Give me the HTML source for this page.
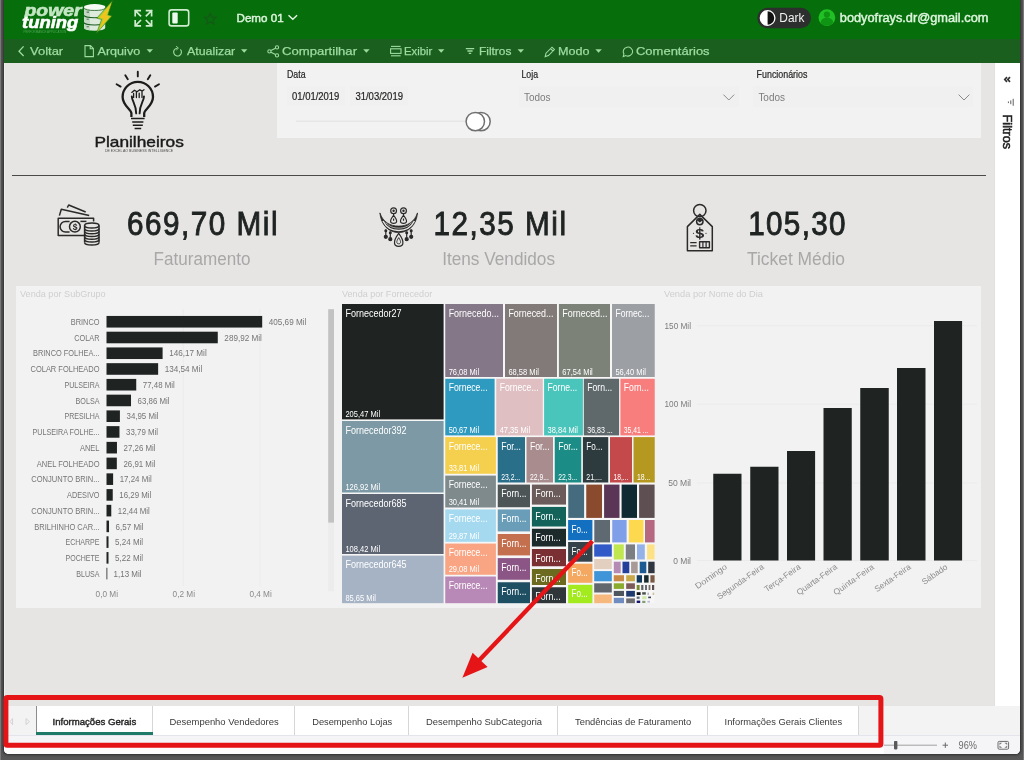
<!DOCTYPE html>
<html lang="pt-BR">
<head>
<meta charset="utf-8">
<title>Demo 01 - Power Tuning</title>
<style>
html,body{margin:0;padding:0}
body{width:1024px;height:760px;position:relative;overflow:hidden;background:#575757;font-family:"Liberation Sans", sans-serif}
.abs{position:absolute}
#win{left:4px;top:0;width:1016px;height:754px;background:#fff;border-radius:0 0 5px 5px;overflow:hidden;box-shadow:0 0 2.5px 0.5px #2e2e2e}
#head{left:0;top:0;width:1016px;height:39px;background:#076e0c}
#tool{left:0;top:39px;width:1016px;height:24px;background:#1b5f1f}
#canvas{left:0;top:63px;width:990px;height:643px;background:#e6e5e3}
#side{left:990px;top:63px;width:26px;height:643px;background:#fff;box-sizing:border-box;border-left:1px solid #e0e0e0}
#status{left:0;top:706px;width:1016px;height:48px;background:#f3f3f3}
#slicers{left:273px;top:0;width:704px;height:75px;background:#f2f2f2}
#charts{left:12px;top:223px;width:965px;height:322px;background:#f2f2f2}
.box{position:absolute;background:#f0f0f0}
#tabs{left:32px;top:1px;height:28px;display:block}
.tab{position:absolute;top:0;height:29px;background:#fff;border-right:1px solid #d6d6d6;box-sizing:border-box}
#ov{left:0;top:0;width:1024px;height:760px;pointer-events:none;will-change:transform}
svg text{font-family:"Liberation Sans", sans-serif}
</style>
</head>
<body>
<div class="abs" style="left:0;top:0;width:1px;height:760px;background:#7a7a7a"></div>
<div class="abs" style="left:1023px;top:0;width:1px;height:760px;background:#7a7a7a"></div>
<div id="win" class="abs">
  <div id="head" class="abs"></div>
  <div id="tool" class="abs"></div>
  <div id="canvas" class="abs">
    <div id="slicers" class="abs">
      <div class="box" style="left:10px;top:23px;width:58px;height:20px"></div>
      <div class="box" style="left:73px;top:23px;width:58px;height:20px"></div>
      <div class="box" style="left:242px;top:23px;width:220px;height:21px"></div>
      <div class="box" style="left:476px;top:23px;width:220px;height:21px"></div>
    </div>
    <div class="abs" style="left:8px;top:112px;width:974px;height:1px;background:#4a4a4a"></div>
    <div id="charts" class="abs"></div>
    <div class="abs" style="left:0;top:0;width:1px;height:643px;background:#eeeeee"></div>
  </div>
  <div id="side" class="abs"></div>
  <div id="status" class="abs">
    <div class="tab" style="left:32px;width:117px;border-left:1px solid #8d8d8d"></div>
    <div class="tab" style="left:149px;width:142px"></div>
    <div class="tab" style="left:291px;width:114px"></div>
    <div class="tab" style="left:405px;width:149px"></div>
    <div class="tab" style="left:554px;width:150px"></div>
    <div class="tab" style="left:704px;width:151px"></div>
    <div class="abs" style="left:32px;top:26px;width:117px;height:3px;background:#1f7a67"></div>
    <div class="abs" style="left:0;top:29px;width:1016px;height:19px;background:#f5f5f8"></div>
    <div class="abs" style="left:0;top:29px;width:1016px;height:1px;background:#e4e5ec"></div>
    <div class="abs" style="left:0;top:42px;width:880px;height:6px;background:#fdfdfd"></div>
  </div>
</div>

<svg id="ov" class="abs" width="1024" height="760" viewBox="0 0 1024 760">
<g id="brand">
<text x="24.50" y="16.40" font-size="16.5" fill="#c4e6c4" font-weight="bold" font-style="italic" stroke="#c4e6c4" stroke-width="0.6" textLength="57.00" lengthAdjust="spacingAndGlyphs">power</text>
<text x="22.00" y="27.60" font-size="16.5" fill="#ffffff" font-weight="bold" font-style="italic" stroke="#ffffff" stroke-width="0.6" textLength="56.30" lengthAdjust="spacingAndGlyphs">tuning</text>
<text x="23.50" y="32.60" font-size="3.2" fill="#4fa653" textLength="42.70" lengthAdjust="spacingAndGlyphs">PERFORMANCE APPLICATION</text>
<path d="M84 7 L84 28 A10.6 2.7 0 0 0 105.2 28 L105.2 7 Z" fill="#dcebdc"/>
<path d="M84 7 L84 28 A10.6 2.7 0 0 0 90 30.2 L90 9 Z" fill="#c3d9c3"/>
<g fill="none" stroke="#1f5c22" stroke-width="1.1"><path d="M84 15.3 A10.6 2.4 0 0 0 105.2 15.3"/><path d="M84 22.6 A10.6 2.4 0 0 0 105.2 22.6"/></g>
<path d="M84.2 8.4 A10.6 2.6 0 0 0 105 8.4" fill="none" stroke="#39743b" stroke-width="0.9"/>
<ellipse cx="94.7" cy="6.8" rx="10.7" ry="2.7" fill="#f6fbf6"/>
<rect x="86.6" y="11.6" width="2.4" height="1.1" fill="#4c6b4e"/><rect x="86.6" y="18.6" width="2.2" height="1.3" fill="#6d8a6f"/><rect x="86.6" y="26" width="2.2" height="1.3" fill="#6d8a6f"/>
<path d="M112.5 0.5 L96.7 18.2 L101.5 19.5 L96.5 33.3 L112 16 L108 14.8 Z" fill="#9ad42b" stroke="#2f6414" stroke-width="0.5"/>
<path d="M111.4 3.2 L99.2 17.6 L103.4 18.8 L99.4 29 L110 16.6 L106.4 15.4 Z" fill="#f0c31f"/>
</g>
<g stroke="#cfeccf" stroke-width="1.7" fill="none" stroke-linecap="square">
<path d="M140.2 10.6 L135.2 10.6 L135.2 15.6 M135.2 10.6 L140.4 15.8"/>
<path d="M146.6 10.6 L151.6 10.6 L151.6 15.6 M151.6 10.6 L146.4 15.8"/>
<path d="M140.2 25.8 L135.2 25.8 L135.2 20.8 M135.2 25.8 L140.4 20.6"/>
<path d="M146.6 25.8 L151.6 25.8 L151.6 20.8 M151.6 25.8 L146.4 20.6"/>
</g>
<rect x="169.1" y="9.9" width="19.6" height="16" rx="2.5" fill="none" stroke="#cfeccf" stroke-width="1.6"/>
<rect x="172.3" y="12.4" width="5.4" height="11.2" rx="1" fill="#eefaee"/>
<path d="M210.2 13.2 L211.9 16.9 L215.9 17.3 L212.9 20 L213.8 23.9 L210.2 21.9 L206.6 23.9 L207.5 20 L204.5 17.3 L208.5 16.9 Z" fill="none" stroke="#145a17" stroke-width="1.3"/>
<text x="236.50" y="21.80" font-size="11.6" fill="#dcf4dc" stroke="#dcf4dc" stroke-width="0.45" textLength="47.10" lengthAdjust="spacingAndGlyphs">Demo 01</text>
<path d="M288.5 15.2 L292.8 19.3 L297.1 15.2" fill="none" stroke="#e4f6e4" stroke-width="1.4"/>
<rect x="757.3" y="7.8" width="53.7" height="20.4" rx="10.2" fill="#2c2f2e"/>
<circle cx="767.6" cy="18" r="7.3" fill="#111" stroke="#fff" stroke-width="1.3"/>
<path d="M767.6 10.7 A7.3 7.3 0 0 0 767.6 25.3 Z" fill="#fff"/>
<text x="779.30" y="22.30" font-size="12" fill="#f2f2f2" textLength="25.10" lengthAdjust="spacingAndGlyphs">Dark</text>
<circle cx="826.9" cy="17.6" r="8.4" fill="#21c024"/>
<circle cx="826.9" cy="14.6" r="3.1" fill="#0f9414"/>
<path d="M820.6 23 A6.3 5.6 0 0 1 833.2 23 A8.4 8.4 0 0 1 820.6 23 Z" fill="#0f9414"/>
<text x="839.80" y="22.20" font-size="12.5" fill="#dcf5dc" stroke="#dcf5dc" stroke-width="0.45" textLength="148.60" lengthAdjust="spacingAndGlyphs">bodyofrays.dr@gmail.com</text>
<g id="toolbar">
<path d="M23.6 46.4 L19 51.2 L23.6 56" fill="none" stroke="#9ddc9f" stroke-width="1.3"/>
<text x="30.00" y="55.40" font-size="11.5" fill="#9ddc9f" stroke="#9ddc9f" stroke-width="0.25" textLength="33.20" lengthAdjust="spacingAndGlyphs">Voltar</text>
<path d="M85 45.6 L90.4 45.6 L93.4 48.6 L93.4 56.6 L85 56.6 Z M90.2 45.8 L90.2 48.8 L93.2 48.8" fill="none" stroke="#9ddc9f" stroke-width="1.1"/>
<text x="97.50" y="55.40" font-size="11.5" fill="#9ddc9f" stroke="#9ddc9f" stroke-width="0.25" textLength="42.70" lengthAdjust="spacingAndGlyphs">Arquivo</text>
<path d="M146.6 49.2 L153.0 49.2 L149.79999999999998 52.8 Z" fill="#9ddc9f"/>
<path d="M180.4 49.4 A3.9 3.9 0 1 1 177 48.2" fill="none" stroke="#9ddc9f" stroke-width="1.15"/><path d="M176.2 46.2 L178.4 48.1 L176.4 50" fill="none" stroke="#9ddc9f" stroke-width="1"/>
<text x="187.00" y="55.40" font-size="11.5" fill="#9ddc9f" stroke="#9ddc9f" stroke-width="0.25" textLength="48.20" lengthAdjust="spacingAndGlyphs">Atualizar</text>
<path d="M241 49.2 L247.4 49.2 L244.2 52.8 Z" fill="#9ddc9f"/>
<g fill="none" stroke="#9ddc9f" stroke-width="1.1"><circle cx="269.4" cy="51.4" r="1.6"/><circle cx="277" cy="47.4" r="1.6"/><circle cx="277" cy="55.4" r="1.6"/><path d="M270.9 50.6 L275.5 48.2 M270.9 52.2 L275.5 54.6"/></g>
<text x="282.00" y="55.40" font-size="11.5" fill="#9ddc9f" stroke="#9ddc9f" stroke-width="0.25" textLength="75.00" lengthAdjust="spacingAndGlyphs">Compartilhar</text>
<path d="M363.2 49.2 L369.59999999999997 49.2 L366.4 52.8 Z" fill="#9ddc9f"/>
<g fill="none" stroke="#9ddc9f" stroke-width="1.1"><path d="M391 46.4 L400.6 46.4"/><rect x="390.6" y="48.8" width="10.4" height="4.6"/><path d="M391 55.8 L400.6 55.8"/></g>
<text x="404.00" y="55.40" font-size="11.5" fill="#9ddc9f" stroke="#9ddc9f" stroke-width="0.25" textLength="28.20" lengthAdjust="spacingAndGlyphs">Exibir</text>
<path d="M438 49.2 L444.4 49.2 L441.2 52.8 Z" fill="#9ddc9f"/>
<g stroke="#9ddc9f" stroke-width="1.3"><path d="M465.8 48.6 L474.2 48.6 M467.4 51 L472.6 51 M468.8 53.4 L471.2 53.4"/></g>
<text x="479.00" y="55.40" font-size="11.5" fill="#9ddc9f" stroke="#9ddc9f" stroke-width="0.25" textLength="32.40" lengthAdjust="spacingAndGlyphs">Filtros</text>
<path d="M517.6 49.2 L524.0 49.2 L520.8000000000001 52.8 Z" fill="#9ddc9f"/>
<path d="M545.2 56.6 L546 53.2 L552 47.2 L554.4 49.6 L548.4 55.6 Z M550.6 48.6 L553 51" fill="none" stroke="#9ddc9f" stroke-width="1.1"/>
<text x="558.00" y="55.40" font-size="11.5" fill="#9ddc9f" stroke="#9ddc9f" stroke-width="0.25" textLength="31.60" lengthAdjust="spacingAndGlyphs">Modo</text>
<path d="M595.4 49.2 L601.8 49.2 L598.6 52.8 Z" fill="#9ddc9f"/>
<path d="M623.2 56.6 L623.9 53.9 A4.7 4.5 0 1 1 625.8 55.6 Z" fill="none" stroke="#9ddc9f" stroke-width="1.05"/>
<text x="636.00" y="55.40" font-size="11.5" fill="#9ddc9f" stroke="#9ddc9f" stroke-width="0.25" textLength="73.60" lengthAdjust="spacingAndGlyphs">Comentários</text>
</g>
<g id="slicer-text">
<text x="287.00" y="78.40" font-size="10.5" fill="#252423" stroke="#252423" stroke-width="0.2" textLength="18.60" lengthAdjust="spacingAndGlyphs">Data</text>
<text x="292.00" y="99.60" font-size="10.5" fill="#252423" stroke="#252423" stroke-width="0.2" textLength="47.40" lengthAdjust="spacingAndGlyphs">01/01/2019</text>
<text x="355.40" y="99.60" font-size="10.5" fill="#252423" stroke="#252423" stroke-width="0.2" textLength="47.60" lengthAdjust="spacingAndGlyphs">31/03/2019</text>
<path d="M296 121.2 L467 121.2" stroke="#e5e5e5" stroke-width="1.6"/>
<circle cx="481" cy="121.6" r="9.2" fill="#fff" stroke="#707070" stroke-width="1.5"/>
<circle cx="475.3" cy="121.6" r="9.2" fill="#fff" stroke="#707070" stroke-width="1.5"/>
<text x="521.50" y="78.40" font-size="10.5" fill="#252423" stroke="#252423" stroke-width="0.2" textLength="16.50" lengthAdjust="spacingAndGlyphs">Loja</text>
<text x="524.00" y="101.00" font-size="10.5" fill="#7c7c7c" textLength="26.60" lengthAdjust="spacingAndGlyphs">Todos</text>
<path d="M723.4 94.6 L728.8 100 L734.2 94.6" fill="none" stroke="#8a8a8a" stroke-width="1"/>
<text x="756.60" y="78.40" font-size="10.5" fill="#252423" stroke="#252423" stroke-width="0.2" textLength="50.80" lengthAdjust="spacingAndGlyphs">Funcionários</text>
<text x="758.40" y="101.00" font-size="10.5" fill="#7c7c7c" textLength="26.60" lengthAdjust="spacingAndGlyphs">Todos</text>
<path d="M958.6 94.6 L964 100 L969.4 94.6" fill="none" stroke="#8a8a8a" stroke-width="1"/>
</g>
<g id="filters-pane">
<path d="M1007 77.2 L1004.8 79.5 L1007 81.8 M1010 77.2 L1007.8 79.5 L1010 81.8" fill="none" stroke="#333" stroke-width="1.7"/>
<path d="M1013.2 98.8 L1013.2 105.8 M1010.8 100.4 L1010.8 104.2 M1008.4 101.5 L1008.4 103.1" stroke="#555" stroke-width="0.95" fill="none"/>
<text transform="translate(1003.40 114.60) rotate(90)" font-size="12" fill="#222" textLength="34.6" lengthAdjust="spacingAndGlyphs" stroke="#222" stroke-width="0.5">Filtros</text>
</g>
<g id="logo" fill="none" stroke="#1c1c1c" stroke-linecap="round">
<path d="M131.4 117 L131.4 113.2 C131.4 109.6 122.6 105.6 122.6 97 A15.2 15.2 0 0 1 153 97 C153 105.6 144.2 109.6 144.2 113.2 L144.2 117" stroke-width="2.3" stroke-linecap="butt"/>
<path d="M131 118.4 L144.6 118.4 M132.2 121.9 L143.4 121.9 M132.8 125.3 L142.8 125.3 M134.6 128.6 L141.2 128.6" stroke-width="1.5" stroke-linecap="butt"/>
<path d="M137.8 71.8 L137.8 76.4 M125.3 75.2 L127.8 79.2 M150.3 75.2 L147.8 79.2 M116.6 84.2 L120.6 86.6 M159 84.2 L155 86.6" stroke-width="1.9"/>
<path d="M136.2 113.4 C136 104 132 101.6 131.8 96.4 M139.6 113.4 C139.8 104 143.8 101.6 144 96.4" stroke-width="1.9"/>
<path d="M133.6 97.4 L133.6 93.4 M136.4 97.6 L136.4 92.2 M139.2 97.6 L139.2 93.2 M142 97.4 L142 91.6 M131.8 92.4 L134.4 90.2 L137 91.8 L139.8 89.8 L142.2 91 L144 89.8" stroke-width="1.3"/>
</g>
<text x="94.40" y="147.00" font-size="14.6" fill="#1a1a1a" stroke="#1a1a1a" stroke-width="0.4" textLength="89.40" lengthAdjust="spacingAndGlyphs">Planilheiros</text>
<text x="105.00" y="151.80" font-size="2.6" fill="#4a4a4a" textLength="68.20" lengthAdjust="spacingAndGlyphs">DE EXCEL AO BUSINESS INTELLIGENCE</text>
<g id="kpi">
<text transform="translate(126.9 235) scale(0.9 1)" font-size="33" fill="#1f2423" stroke="#1f2423" stroke-width="0.9" textLength="167.44" lengthAdjust="spacing">669,70 Mil</text>
<text x="153.60" y="265.00" font-size="17.5" fill="#a8a8a8" textLength="96.80" lengthAdjust="spacingAndGlyphs">Faturamento</text>
<text transform="translate(433.6 235) scale(0.9 1)" font-size="33" fill="#1f2423" stroke="#1f2423" stroke-width="0.9" textLength="147.11" lengthAdjust="spacing">12,35 Mil</text>
<text x="442.20" y="265.00" font-size="17.5" fill="#a8a8a8" textLength="112.80" lengthAdjust="spacingAndGlyphs">Itens Vendidos</text>
<text transform="translate(748.2 235) scale(0.9 1)" font-size="33" fill="#1f2423" stroke="#1f2423" stroke-width="0.9" textLength="108.22" lengthAdjust="spacing">105,30</text>
<text x="747.00" y="265.00" font-size="17.5" fill="#a8a8a8" textLength="98.00" lengthAdjust="spacingAndGlyphs">Ticket Médio</text>
</g>
<g id="ico-cash" fill="none" stroke="#2a2a2a" stroke-width="1.5" stroke-linejoin="round">
<path d="M86 235.4 L58.2 235.4 L58.2 218.2 L93.6 218.2 L93.6 221.4"/>
<path d="M59.4 215.6 L61.3 209.3 L89.2 215.6"/>
<path d="M67.3 207.6 L68.7 205 L85.7 212"/>
<circle cx="74.9" cy="226.7" r="5.4"/>
<path d="M69.6 221.4 L65.4 221.4 A5.3 5.3 0 0 0 65.4 232 L69.6 232"/>
<path d="M80.4 221.4 L86.4 221.4"/>
<ellipse cx="91.8" cy="225.6" rx="7.2" ry="2.5" fill="#e6e5e3"/>
<path d="M84.6 228.4 A7.2 2.5 0 0 0 99 228.4"/>
<path d="M84.6 231.2 A7.2 2.5 0 0 0 99 231.2"/>
<path d="M84.6 234.0 A7.2 2.5 0 0 0 99 234.0"/>
<path d="M84.6 236.8 A7.2 2.5 0 0 0 99 236.8"/>
<path d="M84.6 239.6 A7.2 2.5 0 0 0 99 239.6"/>
<path d="M84.6 242.4 A7.2 2.5 0 0 0 99 242.4"/>
<path d="M84.6 225.6 L84.6 242.4 M99 225.6 L99 242.4"/>
</g>
<text x="72.70" y="229.90" font-size="8.5" fill="#2a2a2a" font-weight="bold">$</text>
<g id="ico-neck" fill="none" stroke="#2a2a2a" stroke-width="1.2">
<path d="M379.9 212.9 C383 222 390 226.1 398.7 226.1 C407.4 226.1 414.4 222 417.5 212.9 C416.5 225 408.5 232.6 398.7 232.6 C388.9 232.6 380.9 225 379.9 212.9 Z" fill="#2a2a2a" stroke-width="0.8"/>
<path d="M383 221 C386.4 227.6 392 230.5 398.7 230.5 C405.4 230.5 411 227.6 414.4 221" stroke="#e6e5e3" stroke-width="1.5"/>
<path d="M385.8 222.6 C389.4 226.8 393.6 228.1 398.7 228.1 C403.8 228.1 408 226.8 411.6 222.6" stroke="#e6e5e3" stroke-width="0.7"/>
<circle cx="393.6" cy="210.7" r="2.9"/><circle cx="393.6" cy="210.7" r="0.6" fill="#2a2a2a"/>
<path d="M393.6 213.6 L393.6 215.4 M393.6 215.4 C389.0 221 390.20000000000005 223.4 393.6 223.4 C397.0 223.4 398.20000000000005 221 393.6 215.4 Z M393.6 218.4 L393.6 220.8"/>
<circle cx="403.5" cy="210.7" r="2.9"/><circle cx="403.5" cy="210.7" r="0.6" fill="#2a2a2a"/>
<path d="M403.5 213.6 L403.5 215.4 M403.5 215.4 C398.9 221 400.1 223.4 403.5 223.4 C406.9 223.4 408.1 221 403.5 215.4 Z M403.5 218.4 L403.5 220.8"/>
<path d="M398.7 233.4 C392.2 242 394 246.4 398.7 246.4 C403.4 246.4 405.2 242 398.7 233.4 Z"/>
<path d="M398.7 237.6 C395.8 242 396.6 243.8 398.7 243.8 C400.8 243.8 401.6 242 398.7 237.6 Z" stroke-width="0.9"/>
<path d="M385.8 229.4 L385.8 235.20000000000002"/><circle cx="385.8" cy="236.8" r="1.5" fill="#2a2a2a"/><circle cx="385.8" cy="230.8" r="0.9" fill="#2a2a2a"/>
<path d="M390.3 231.4 L390.3 237.6"/><circle cx="390.3" cy="239.2" r="1.5" fill="#2a2a2a"/><circle cx="390.3" cy="232.8" r="0.9" fill="#2a2a2a"/>
<path d="M406.7 231.4 L406.7 237.6"/><circle cx="406.7" cy="239.2" r="1.5" fill="#2a2a2a"/><circle cx="406.7" cy="232.8" r="0.9" fill="#2a2a2a"/>
<path d="M411.2 229.4 L411.2 235.20000000000002"/><circle cx="411.2" cy="236.8" r="1.5" fill="#2a2a2a"/><circle cx="411.2" cy="230.8" r="0.9" fill="#2a2a2a"/>
</g>
<g id="ico-tag" fill="none" stroke="#2a2a2a" stroke-width="1.5" stroke-linejoin="round">
<path d="M687.4 250.8 L687.4 226.6 L699.8 214.4 L712.3 226.6 L712.3 250.8 Z"/>
<circle cx="699.8" cy="210.6" r="6.2"/>
<circle cx="699.8" cy="221.6" r="3.2"/>
<path d="M690.2 242.6 L696.6 242.6 M690.2 245.9 L696.6 245.9" stroke-width="1.2"/>
<rect x="699.6" y="241.8" width="9.8" height="6" fill="none" stroke-width="1.4"/>
<path d="M702.9 242 L702.9 247.6 M706.1 242 L706.1 247.6" stroke-width="1.2"/>
<circle cx="693.5" cy="233.3" r="0.6" fill="#2a2a2a" stroke="none"/><circle cx="706" cy="233.3" r="0.6" fill="#2a2a2a" stroke="none"/>
</g>
<text transform="translate(699.80 237.60) scale(1.3 1)" font-size="12.5" fill="#2a2a2a" font-weight="bold" text-anchor="middle">$</text>
<path d="M699.8 227.2 L699.8 239.2" stroke="#2a2a2a" stroke-width="1.1"/>
<path d="M697 220.6 A3 3 0 0 1 702.6 220.6 L699.8 222.6 Z" fill="#2a2a2a"/>
<g id="bar-chart">
<text x="20.00" y="296.80" font-size="9.2" fill="#cfcfcf" textLength="85.60" lengthAdjust="spacingAndGlyphs">Venda por SubGrupo</text>
<path d="M183.3 309 L183.3 586 M260 309 L260 586" stroke="#ececec" stroke-width="1"/>
<rect x="106.5" y="315.95" width="155.70" height="11.6" fill="#1f2423"/>
<text x="70.75" y="324.95" font-size="9" fill="#757575" textLength="28.75" lengthAdjust="spacingAndGlyphs">BRINCO</text>
<text x="268.80" y="324.95" font-size="9" fill="#757575" textLength="37.50" lengthAdjust="spacingAndGlyphs">405,69 Mil</text>
<rect x="106.5" y="331.69" width="111.27" height="11.6" fill="#1f2423"/>
<text x="74.25" y="340.69" font-size="9" fill="#757575" textLength="25.25" lengthAdjust="spacingAndGlyphs">COLAR</text>
<text x="224.37" y="340.69" font-size="9" fill="#757575" textLength="37.50" lengthAdjust="spacingAndGlyphs">289,92 Mil</text>
<rect x="106.5" y="347.43" width="56.10" height="11.6" fill="#1f2423"/>
<text x="33.00" y="356.43" font-size="9" fill="#757575" textLength="66.50" lengthAdjust="spacingAndGlyphs">BRINCO FOLHEA...</text>
<text x="169.20" y="356.43" font-size="9" fill="#757575" textLength="37.50" lengthAdjust="spacingAndGlyphs">146,17 Mil</text>
<rect x="106.5" y="363.17" width="51.64" height="11.6" fill="#1f2423"/>
<text x="30.50" y="372.17" font-size="9" fill="#757575" textLength="69.00" lengthAdjust="spacingAndGlyphs">COLAR FOLHEADO</text>
<text x="164.74" y="372.17" font-size="9" fill="#757575" textLength="37.50" lengthAdjust="spacingAndGlyphs">134,54 Mil</text>
<rect x="106.5" y="378.91" width="29.74" height="11.6" fill="#1f2423"/>
<text x="64.50" y="387.91" font-size="9" fill="#757575" textLength="35.00" lengthAdjust="spacingAndGlyphs">PULSEIRA</text>
<text x="142.84" y="387.91" font-size="9" fill="#757575" textLength="32.00" lengthAdjust="spacingAndGlyphs">77,48 Mil</text>
<rect x="106.5" y="394.65" width="24.51" height="11.6" fill="#1f2423"/>
<text x="75.50" y="403.65" font-size="9" fill="#757575" textLength="24.00" lengthAdjust="spacingAndGlyphs">BOLSA</text>
<text x="137.61" y="403.65" font-size="9" fill="#757575" textLength="32.00" lengthAdjust="spacingAndGlyphs">63,86 Mil</text>
<rect x="106.5" y="410.39" width="13.41" height="11.6" fill="#1f2423"/>
<text x="64.50" y="419.39" font-size="9" fill="#757575" textLength="35.00" lengthAdjust="spacingAndGlyphs">PRESILHA</text>
<text x="126.51" y="419.39" font-size="9" fill="#757575" textLength="32.00" lengthAdjust="spacingAndGlyphs">34,95 Mil</text>
<rect x="106.5" y="426.13" width="12.97" height="11.6" fill="#1f2423"/>
<text x="32.50" y="435.13" font-size="9" fill="#757575" textLength="67.00" lengthAdjust="spacingAndGlyphs">PULSEIRA FOLHE...</text>
<text x="126.07" y="435.13" font-size="9" fill="#757575" textLength="32.00" lengthAdjust="spacingAndGlyphs">33,79 Mil</text>
<rect x="106.5" y="441.87" width="10.46" height="11.6" fill="#1f2423"/>
<text x="80.00" y="450.87" font-size="9" fill="#757575" textLength="19.50" lengthAdjust="spacingAndGlyphs">ANEL</text>
<text x="123.56" y="450.87" font-size="9" fill="#757575" textLength="32.00" lengthAdjust="spacingAndGlyphs">27,26 Mil</text>
<rect x="106.5" y="457.61" width="10.33" height="11.6" fill="#1f2423"/>
<text x="36.75" y="466.61" font-size="9" fill="#757575" textLength="62.75" lengthAdjust="spacingAndGlyphs">ANEL FOLHEADO</text>
<text x="123.43" y="466.61" font-size="9" fill="#757575" textLength="32.00" lengthAdjust="spacingAndGlyphs">26,91 Mil</text>
<rect x="106.5" y="473.35" width="6.62" height="11.6" fill="#1f2423"/>
<text x="31.25" y="482.35" font-size="9" fill="#757575" textLength="68.25" lengthAdjust="spacingAndGlyphs">CONJUNTO BRIN...</text>
<text x="119.72" y="482.35" font-size="9" fill="#757575" textLength="32.00" lengthAdjust="spacingAndGlyphs">17,24 Mil</text>
<rect x="106.5" y="489.09" width="6.25" height="11.6" fill="#1f2423"/>
<text x="67.00" y="498.09" font-size="9" fill="#757575" textLength="32.50" lengthAdjust="spacingAndGlyphs">ADESIVO</text>
<text x="119.35" y="498.09" font-size="9" fill="#757575" textLength="32.00" lengthAdjust="spacingAndGlyphs">16,29 Mil</text>
<rect x="106.5" y="504.83" width="4.77" height="11.6" fill="#1f2423"/>
<text x="31.25" y="513.83" font-size="9" fill="#757575" textLength="68.25" lengthAdjust="spacingAndGlyphs">CONJUNTO BRIN...</text>
<text x="117.87" y="513.83" font-size="9" fill="#757575" textLength="32.00" lengthAdjust="spacingAndGlyphs">12,44 Mil</text>
<rect x="106.5" y="520.57" width="2.52" height="11.6" fill="#1f2423"/>
<text x="34.25" y="529.57" font-size="9" fill="#757575" textLength="65.25" lengthAdjust="spacingAndGlyphs">BRILHINHO CAR...</text>
<text x="115.62" y="529.57" font-size="9" fill="#757575" textLength="28.00" lengthAdjust="spacingAndGlyphs">6,57 Mil</text>
<rect x="106.5" y="536.31" width="2.01" height="11.6" fill="#1f2423"/>
<text x="65.50" y="545.31" font-size="9" fill="#757575" textLength="34.00" lengthAdjust="spacingAndGlyphs">ECHARPE</text>
<text x="115.11" y="545.31" font-size="9" fill="#757575" textLength="28.00" lengthAdjust="spacingAndGlyphs">5,24 Mil</text>
<rect x="106.5" y="552.05" width="2.00" height="11.6" fill="#1f2423"/>
<text x="65.50" y="561.05" font-size="9" fill="#757575" textLength="34.00" lengthAdjust="spacingAndGlyphs">POCHETE</text>
<text x="115.10" y="561.05" font-size="9" fill="#757575" textLength="28.00" lengthAdjust="spacingAndGlyphs">5,22 Mil</text>
<rect x="106.5" y="567.79" width="0.80" height="11.6" fill="#1f2423"/>
<text x="76.25" y="576.79" font-size="9" fill="#757575" textLength="23.25" lengthAdjust="spacingAndGlyphs">BLUSA</text>
<text x="113.53" y="576.79" font-size="9" fill="#757575" textLength="28.00" lengthAdjust="spacingAndGlyphs">1,13 Mil</text>
<text x="95.60" y="597.40" font-size="9" fill="#8a8a8a" textLength="22.40" lengthAdjust="spacingAndGlyphs">0,0 Mi</text>
<text x="172.60" y="597.40" font-size="9" fill="#8a8a8a" textLength="22.40" lengthAdjust="spacingAndGlyphs">0,2 Mi</text>
<text x="249.40" y="597.40" font-size="9" fill="#8a8a8a" textLength="22.40" lengthAdjust="spacingAndGlyphs">0,4 Mi</text>
<rect x="328.2" y="309.2" width="5.8" height="282" fill="#ececec"/>
<rect x="328.2" y="309.2" width="5.8" height="213.4" fill="#c2c2c2"/>
</g>
<g id="treemap">
<text x="342.00" y="296.80" font-size="9.2" fill="#cfcfcf" textLength="90.20" lengthAdjust="spacingAndGlyphs">Venda por Fornecedor</text>
<rect x="342" y="304" width="312.7" height="299.2" fill="#f7f6f6"/>
<rect x="342" y="304" width="101.60" height="115.40" fill="#1f2423"/>
<rect x="342" y="421" width="101.60" height="71.50" fill="#7c99a5"/>
<rect x="342" y="494" width="101.60" height="60.00" fill="#5d6573"/>
<rect x="342" y="555.6" width="101.60" height="47.60" fill="#a6b3c5"/>
<rect x="445.25" y="304" width="57.75" height="73.00" fill="#847787"/>
<rect x="505" y="304" width="52.00" height="73.00" fill="#827a78"/>
<rect x="558.9" y="304" width="51.10" height="73.00" fill="#7c8278"/>
<rect x="612" y="304" width="42.75" height="73.00" fill="#9c9fa4"/>
<rect x="445.25" y="378.75" width="49.35" height="56.65" fill="#2f9ac0"/>
<rect x="496.25" y="378.75" width="46.50" height="56.65" fill="#dfbfc1"/>
<rect x="544.1" y="378.75" width="38.80" height="56.65" fill="#4ac5bb"/>
<rect x="583.8" y="378.75" width="35.30" height="56.65" fill="#5f696c"/>
<rect x="620.4" y="378.75" width="34.35" height="56.65" fill="#f87e7e"/>
<rect x="445.25" y="437.1" width="50.65" height="36.65" fill="#f5d04e"/>
<rect x="445.25" y="475.6" width="50.65" height="31.90" fill="#7f8a8c"/>
<rect x="445.25" y="509.4" width="50.65" height="32.40" fill="#a5d9f0"/>
<rect x="445.25" y="543.6" width="50.65" height="31.15" fill="#f9a482"/>
<rect x="445.25" y="576.5" width="50.65" height="26.70" fill="#b889b6"/>
<rect x="497.75" y="437.1" width="27.25" height="45.40" fill="#2a6f8a"/>
<rect x="526.5" y="437.1" width="26.50" height="45.40" fill="#a88c8e"/>
<rect x="554.75" y="437.1" width="26.50" height="45.40" fill="#1b8c86"/>
<rect x="582.9" y="437.1" width="25.35" height="45.40" fill="#2d3a3e"/>
<rect x="610" y="437.1" width="22.00" height="45.40" fill="#c4494b"/>
<rect x="633.5" y="437.1" width="21.25" height="45.40" fill="#b5981f"/>
<rect x="497.75" y="484.6" width="32.25" height="22.65" fill="#4d5557"/>
<rect x="497.75" y="509.4" width="32.25" height="22.00" fill="#6a9eb8"/>
<rect x="497.75" y="534" width="32.25" height="21.40" fill="#c46f4e"/>
<rect x="497.75" y="558.1" width="32.25" height="21.65" fill="#8b5585"/>
<rect x="497.75" y="582.25" width="32.25" height="20.95" fill="#1f4f63"/>
<rect x="531.9" y="484.6" width="34.10" height="20.00" fill="#6b5b5b"/>
<rect x="531.9" y="506.9" width="34.10" height="19.60" fill="#13635a"/>
<rect x="531.9" y="528.75" width="34.10" height="17.75" fill="#1d2a2c"/>
<rect x="531.9" y="549" width="34.10" height="17.25" fill="#7a3033"/>
<rect x="531.9" y="569" width="34.10" height="16.00" fill="#6b6a1f"/>
<rect x="531.9" y="587.25" width="34.10" height="15.95" fill="#2e363a"/>
<rect x="568.25" y="484.6" width="15.85" height="33.30" fill="#446b7e"/>
<rect x="586.25" y="484.6" width="15.75" height="33.30" fill="#8a4a2e"/>
<rect x="604.1" y="484.6" width="15.40" height="33.30" fill="#5a3555"/>
<rect x="621.6" y="484.6" width="15.40" height="33.30" fill="#0f2a33"/>
<rect x="639.1" y="484.6" width="15.50" height="33.30" fill="#5d4f52"/>
<rect x="568.1" y="520" width="24.30" height="20.20" fill="#1370c0"/>
<rect x="568.1" y="542" width="24.30" height="19.70" fill="#36424a"/>
<rect x="568.1" y="563.7" width="24.30" height="19.10" fill="#f5a860"/>
<rect x="568.1" y="584.8" width="24.30" height="18.40" fill="#a3ea1f"/>
<rect x="594.3" y="520" width="15.70" height="22.40" fill="#5f6972"/>
<rect x="612.25" y="520" width="14.35" height="22.40" fill="#7f9fe8"/>
<rect x="628.75" y="520" width="14.75" height="22.40" fill="#fdd950"/>
<rect x="645" y="520" width="9.60" height="22.40" fill="#b5687f"/>
<rect x="594.2" y="544.4" width="17.60" height="12.20" fill="#3159c7"/>
<rect x="594.2" y="559" width="17.60" height="10.10" fill="#e3cfc0"/>
<rect x="594.2" y="571.1" width="17.60" height="10.20" fill="#3f95d8"/>
<rect x="594.2" y="583.3" width="17.60" height="9.20" fill="#62666d"/>
<rect x="594.2" y="594.5" width="17.60" height="8.70" fill="#f7b87e"/>
<rect x="613.8" y="544.4" width="10.00" height="15.10" fill="#c0e650"/>
<rect x="625.8" y="544.4" width="9.20" height="15.10" fill="#7b7f84"/>
<rect x="637" y="544.4" width="7.80" height="15.10" fill="#94b2e8"/>
<rect x="647.1" y="544.4" width="7.50" height="15.10" fill="#fde285"/>
<rect x="613.8" y="561.7" width="6.90" height="11.50" fill="#b58ab5"/>
<rect x="622.5" y="561.7" width="6.80" height="11.50" fill="#24409a"/>
<rect x="631.1" y="561.7" width="6.60" height="11.50" fill="#a89a94"/>
<rect x="639.7" y="561.7" width="6.60" height="11.50" fill="#1d5b92"/>
<rect x="648.2" y="561.7" width="6.40" height="11.50" fill="#2f3640"/>
<rect x="613.8" y="575.2" width="10.20" height="6.10" fill="#c98a45"/>
<rect x="626.2" y="575.2" width="8.70" height="6.10" fill="#c9a847"/>
<rect x="636.7" y="575.2" width="5.30" height="7.40" fill="#123a5c"/>
<rect x="644.1" y="575.2" width="4.50" height="7.40" fill="#1a2a2c"/>
<rect x="650.4" y="575.2" width="4.20" height="7.40" fill="#7a5a45"/>
<rect x="613.8" y="583.3" width="10.20" height="5.60" fill="#8aab2d"/>
<rect x="626.2" y="583.3" width="8.70" height="5.60" fill="#7d5a5a"/>
<rect x="636.7" y="585" width="2.90" height="5.00" fill="#7b8a2d"/>
<rect x="641.2" y="585" width="2.20" height="5.00" fill="#5f6366"/>
<rect x="645" y="585" width="2.00" height="5.00" fill="#6a6d78"/>
<rect x="648.6" y="585" width="1.80" height="5.00" fill="#77705f"/>
<rect x="652" y="585" width="2.20" height="5.00" fill="#5a4c50"/>
<rect x="613.8" y="590.9" width="10.20" height="5.10" fill="#4f555c"/>
<rect x="626.2" y="590.9" width="8.70" height="5.70" fill="#1f3a6e"/>
<rect x="636.7" y="592.2" width="3.90" height="2.80" fill="#101418"/>
<rect x="642.2" y="592.2" width="3.60" height="2.40" fill="#4a5048"/>
<rect x="647.4" y="592.6" width="1.60" height="2.40" fill="#b9b6c6"/>
<rect x="652.6" y="592.6" width="1.60" height="2.40" fill="#c9c29a"/>
<rect x="613.8" y="597.8" width="10.20" height="5.40" fill="#6f8cc0"/>
<rect x="626.2" y="598.4" width="8.70" height="4.80" fill="#6d6d72"/>
<rect x="636.7" y="596.6" width="2.90" height="2.20" fill="#5a6470"/>
<rect x="642.2" y="596.2" width="4.20" height="3.00" fill="#cfe9a8"/>
<rect x="648.2" y="596.6" width="2.80" height="1.60" fill="#3a3f55"/>
<rect x="636.7" y="600.6" width="3.50" height="2.40" fill="#14166e"/>
<rect x="642.2" y="600.8" width="3.20" height="2.20" fill="#7fa070"/>
<rect x="647.4" y="600.8" width="2.60" height="1.80" fill="#b8bcd6"/>
<text x="345.40" y="316.60" font-size="10" fill="#ffffff" textLength="56.25" lengthAdjust="spacingAndGlyphs">Fornecedor27</text>
<text x="345.40" y="417.00" font-size="8.5" fill="#ffffff" textLength="34.75" lengthAdjust="spacingAndGlyphs">205,47 Mil</text>
<text x="345.40" y="433.60" font-size="10" fill="#ffffff" textLength="61.25" lengthAdjust="spacingAndGlyphs">Fornecedor392</text>
<text x="345.40" y="490.10" font-size="8.5" fill="#ffffff" textLength="34.75" lengthAdjust="spacingAndGlyphs">126,92 Mil</text>
<text x="345.40" y="506.60" font-size="10" fill="#ffffff" textLength="61.25" lengthAdjust="spacingAndGlyphs">Fornecedor685</text>
<text x="345.40" y="551.60" font-size="8.5" fill="#ffffff" textLength="34.75" lengthAdjust="spacingAndGlyphs">108,42 Mil</text>
<text x="345.40" y="568.20" font-size="10" fill="#ffffff" textLength="61.25" lengthAdjust="spacingAndGlyphs">Fornecedor645</text>
<text x="345.40" y="600.80" font-size="8.5" fill="#ffffff" textLength="30.50" lengthAdjust="spacingAndGlyphs">85,65 Mil</text>
<text x="448.65" y="316.60" font-size="10" fill="#ffffff" textLength="50.25" lengthAdjust="spacingAndGlyphs">Fornecedo...</text>
<text x="448.65" y="374.60" font-size="8.5" fill="#ffffff" textLength="30.50" lengthAdjust="spacingAndGlyphs">76,08 Mil</text>
<text x="508.40" y="316.60" font-size="10" fill="#ffffff" textLength="45.00" lengthAdjust="spacingAndGlyphs">Forneced...</text>
<text x="508.40" y="374.60" font-size="8.5" fill="#ffffff" textLength="30.50" lengthAdjust="spacingAndGlyphs">68,58 Mil</text>
<text x="562.30" y="316.60" font-size="10" fill="#ffffff" textLength="45.25" lengthAdjust="spacingAndGlyphs">Forneced...</text>
<text x="562.30" y="374.60" font-size="8.5" fill="#ffffff" textLength="30.50" lengthAdjust="spacingAndGlyphs">67,54 Mil</text>
<text x="615.40" y="316.60" font-size="10" fill="#ffffff" textLength="33.90" lengthAdjust="spacingAndGlyphs">Fornec...</text>
<text x="615.40" y="374.60" font-size="8.5" fill="#ffffff" textLength="30.50" lengthAdjust="spacingAndGlyphs">56,40 Mil</text>
<text x="448.65" y="391.35" font-size="10" fill="#ffffff" textLength="39.00" lengthAdjust="spacingAndGlyphs">Fornece...</text>
<text x="448.65" y="433.00" font-size="8.5" fill="#ffffff" textLength="30.50" lengthAdjust="spacingAndGlyphs">50,67 Mil</text>
<text x="499.65" y="391.35" font-size="10" fill="#ffffff" textLength="39.00" lengthAdjust="spacingAndGlyphs">Fornece...</text>
<text x="499.65" y="433.00" font-size="8.5" fill="#ffffff" textLength="30.50" lengthAdjust="spacingAndGlyphs">47,35 Mil</text>
<text x="547.50" y="391.35" font-size="10" fill="#ffffff" textLength="29.75" lengthAdjust="spacingAndGlyphs">Forne...</text>
<text x="547.50" y="433.00" font-size="8.5" fill="#ffffff" textLength="30.50" lengthAdjust="spacingAndGlyphs">38,84 Mil</text>
<text x="587.20" y="391.35" font-size="10" fill="#ffffff" textLength="25.00" lengthAdjust="spacingAndGlyphs">Forn...</text>
<text x="587.20" y="433.00" font-size="8.5" fill="#ffffff" textLength="25.60" lengthAdjust="spacingAndGlyphs">36,83 ...</text>
<text x="623.80" y="391.35" font-size="10" fill="#ffffff" textLength="25.00" lengthAdjust="spacingAndGlyphs">Forn...</text>
<text x="623.80" y="433.00" font-size="8.5" fill="#ffffff" textLength="24.40" lengthAdjust="spacingAndGlyphs">35,41 ...</text>
<text x="448.65" y="449.70" font-size="10" fill="#ffffff" textLength="39.00" lengthAdjust="spacingAndGlyphs">Fornece...</text>
<text x="448.65" y="471.35" font-size="8.5" fill="#ffffff" textLength="30.50" lengthAdjust="spacingAndGlyphs">33,81 Mil</text>
<text x="448.65" y="488.20" font-size="10" fill="#ffffff" textLength="39.00" lengthAdjust="spacingAndGlyphs">Fornece...</text>
<text x="448.65" y="505.10" font-size="8.5" fill="#ffffff" textLength="30.50" lengthAdjust="spacingAndGlyphs">30,41 Mil</text>
<text x="448.65" y="522.00" font-size="10" fill="#ffffff" textLength="39.00" lengthAdjust="spacingAndGlyphs">Fornece...</text>
<text x="448.65" y="539.40" font-size="8.5" fill="#ffffff" textLength="30.50" lengthAdjust="spacingAndGlyphs">29,87 Mil</text>
<text x="448.65" y="556.20" font-size="10" fill="#ffffff" textLength="39.00" lengthAdjust="spacingAndGlyphs">Fornece...</text>
<text x="448.65" y="572.35" font-size="8.5" fill="#ffffff" textLength="30.50" lengthAdjust="spacingAndGlyphs">29,08 Mil</text>
<text x="448.65" y="589.10" font-size="10" fill="#ffffff" textLength="39.00" lengthAdjust="spacingAndGlyphs">Fornece...</text>
<text x="501.15" y="449.70" font-size="10" fill="#ffffff" textLength="19.75" lengthAdjust="spacingAndGlyphs">For...</text>
<text x="501.15" y="480.10" font-size="8.5" fill="#ffffff" textLength="19.00" lengthAdjust="spacingAndGlyphs">23,2...</text>
<text x="529.90" y="449.70" font-size="10" fill="#ffffff" textLength="19.75" lengthAdjust="spacingAndGlyphs">For...</text>
<text x="529.90" y="480.10" font-size="8.5" fill="#ffffff" textLength="19.00" lengthAdjust="spacingAndGlyphs">22,9...</text>
<text x="558.15" y="449.70" font-size="10" fill="#ffffff" textLength="19.75" lengthAdjust="spacingAndGlyphs">For...</text>
<text x="558.15" y="480.10" font-size="8.5" fill="#ffffff" textLength="19.00" lengthAdjust="spacingAndGlyphs">22,3...</text>
<text x="586.30" y="449.70" font-size="10" fill="#ffffff" textLength="16.25" lengthAdjust="spacingAndGlyphs">Fo...</text>
<text x="586.30" y="480.10" font-size="8.5" fill="#ffffff" textLength="15.60" lengthAdjust="spacingAndGlyphs">21,...</text>
<text x="613.40" y="480.10" font-size="8.5" fill="#ffffff" textLength="15.00" lengthAdjust="spacingAndGlyphs">18,...</text>
<text x="636.90" y="480.10" font-size="8.5" fill="#ffffff" textLength="13.40" lengthAdjust="spacingAndGlyphs">18...</text>
<text x="501.15" y="497.20" font-size="10" fill="#ffffff" textLength="25.40" lengthAdjust="spacingAndGlyphs">Forn...</text>
<text x="501.15" y="522.00" font-size="10" fill="#ffffff" textLength="25.40" lengthAdjust="spacingAndGlyphs">Forn...</text>
<text x="501.15" y="546.60" font-size="10" fill="#ffffff" textLength="25.40" lengthAdjust="spacingAndGlyphs">Forn...</text>
<text x="501.15" y="570.70" font-size="10" fill="#ffffff" textLength="25.40" lengthAdjust="spacingAndGlyphs">Forn...</text>
<text x="501.15" y="594.85" font-size="10" fill="#ffffff" textLength="25.40" lengthAdjust="spacingAndGlyphs">Forn...</text>
<text x="535.30" y="497.20" font-size="10" fill="#ffffff" textLength="25.40" lengthAdjust="spacingAndGlyphs">Forn...</text>
<text x="535.30" y="519.50" font-size="10" fill="#ffffff" textLength="25.40" lengthAdjust="spacingAndGlyphs">Forn...</text>
<text x="535.30" y="541.35" font-size="10" fill="#ffffff" textLength="25.40" lengthAdjust="spacingAndGlyphs">Forn...</text>
<text x="535.30" y="561.60" font-size="10" fill="#ffffff" textLength="25.40" lengthAdjust="spacingAndGlyphs">Forn...</text>
<text x="535.30" y="581.60" font-size="10" fill="#ffffff" textLength="25.40" lengthAdjust="spacingAndGlyphs">Forn...</text>
<text x="535.30" y="599.85" font-size="10" fill="#ffffff" textLength="25.40" lengthAdjust="spacingAndGlyphs">Forn...</text>
<text x="571.50" y="532.60" font-size="10" fill="#ffffff" textLength="16.25" lengthAdjust="spacingAndGlyphs">Fo...</text>
<text x="571.50" y="554.60" font-size="10" fill="#ffffff" textLength="16.25" lengthAdjust="spacingAndGlyphs">Fo...</text>
<text x="571.50" y="576.30" font-size="10" fill="#ffffff" textLength="16.25" lengthAdjust="spacingAndGlyphs">Fo...</text>
<text x="571.50" y="597.40" font-size="10" fill="#ffffff" textLength="16.25" lengthAdjust="spacingAndGlyphs">Fo...</text>
</g>
<g id="col-chart">
<text x="664.00" y="296.80" font-size="9.2" fill="#cfcfcf" textLength="99.00" lengthAdjust="spacingAndGlyphs">Venda por Nome do Dia</text>
<path d="M697 325.75 L977 325.75" stroke="#ebebeb" stroke-width="1"/>
<text x="664.50" y="328.75" font-size="8.5" fill="#7b7b7b" textLength="26.50" lengthAdjust="spacingAndGlyphs">150 Mil</text>
<path d="M697 404.25 L977 404.25" stroke="#ebebeb" stroke-width="1"/>
<text x="664.50" y="407.25" font-size="8.5" fill="#7b7b7b" textLength="26.50" lengthAdjust="spacingAndGlyphs">100 Mil</text>
<path d="M697 483 L977 483" stroke="#ebebeb" stroke-width="1"/>
<text x="668.20" y="486.00" font-size="8.5" fill="#7b7b7b" textLength="22.80" lengthAdjust="spacingAndGlyphs">50 Mil</text>
<path d="M697 560.5 L977 560.5" stroke="#ebebeb" stroke-width="1"/>
<text x="673.20" y="563.50" font-size="8.5" fill="#7b7b7b" textLength="17.80" lengthAdjust="spacingAndGlyphs">0 Mil</text>
<rect x="713.25" y="473.75" width="28.25" height="86.75" fill="#1f2423"/>
<text transform="translate(727.58 568.20) rotate(-35)" font-size="8.3" fill="#8c8c8c" text-anchor="end" textLength="36.6" lengthAdjust="spacingAndGlyphs">Domingo</text>
<rect x="750.25" y="466.75" width="28.25" height="93.75" fill="#1f2423"/>
<text transform="translate(764.58 568.20) rotate(-35)" font-size="8.3" fill="#8c8c8c" text-anchor="end" textLength="55" lengthAdjust="spacingAndGlyphs">Segunda-Feira</text>
<rect x="787" y="451" width="28.10" height="109.50" fill="#1f2423"/>
<text transform="translate(801.25 568.20) rotate(-35)" font-size="8.3" fill="#8c8c8c" text-anchor="end" textLength="42" lengthAdjust="spacingAndGlyphs">Terça-Feira</text>
<rect x="823.5" y="408" width="28.25" height="152.50" fill="#1f2423"/>
<text transform="translate(837.83 568.20) rotate(-35)" font-size="8.3" fill="#8c8c8c" text-anchor="end" textLength="47.5" lengthAdjust="spacingAndGlyphs">Quarta-Feira</text>
<rect x="860.25" y="388" width="28.50" height="172.50" fill="#1f2423"/>
<text transform="translate(874.70 568.20) rotate(-35)" font-size="8.3" fill="#8c8c8c" text-anchor="end" textLength="47.5" lengthAdjust="spacingAndGlyphs">Quinta-Feira</text>
<rect x="897" y="368" width="28.50" height="192.50" fill="#1f2423"/>
<text transform="translate(911.45 568.20) rotate(-35)" font-size="8.3" fill="#8c8c8c" text-anchor="end" textLength="42" lengthAdjust="spacingAndGlyphs">Sexta-Feira</text>
<rect x="934" y="321" width="28.10" height="239.50" fill="#1f2423"/>
<text transform="translate(948.25 568.20) rotate(-35)" font-size="8.3" fill="#8c8c8c" text-anchor="end" textLength="29.4" lengthAdjust="spacingAndGlyphs">Sábado</text>
</g>
<g id="tabs-text">
<text x="52.50" y="725.00" font-size="9.5" fill="#252423" stroke="#252423" stroke-width="0.4" textLength="83.70" lengthAdjust="spacingAndGlyphs">Informações Gerais</text>
<text x="169.50" y="725.00" font-size="9.5" fill="#3a3a3a" textLength="109.10" lengthAdjust="spacingAndGlyphs">Desempenho Vendedores</text>
<text x="312.20" y="725.00" font-size="9.5" fill="#3a3a3a" textLength="80.00" lengthAdjust="spacingAndGlyphs">Desempenho Lojas</text>
<text x="426.00" y="725.00" font-size="9.5" fill="#3a3a3a" textLength="116.00" lengthAdjust="spacingAndGlyphs">Desempenho SubCategoria</text>
<text x="575.00" y="725.00" font-size="9.5" fill="#3a3a3a" textLength="116.20" lengthAdjust="spacingAndGlyphs">Tendências de Faturamento</text>
<text x="724.60" y="725.00" font-size="9.5" fill="#3a3a3a" textLength="117.60" lengthAdjust="spacingAndGlyphs">Informações Gerais Clientes</text>
<path d="M12.6 718.6 L10 721.6 L12.6 724.6 Z M26 718.6 L29.4 721.6 L26 724.6 Z" fill="none" stroke="#cfcfcf" stroke-width="0.9"/>
</g>
<g id="zoom">
<path d="M884 745.2 L937 745.2" stroke="#8a8a8a" stroke-width="0.8"/>
<rect x="894" y="741" width="3.4" height="8.4" rx="0.8" fill="#5a5a5a"/>
<path d="M942.6 745.2 L948 745.2 M945.3 742.5 L945.3 747.9" stroke="#6a6a6a" stroke-width="1"/>
<text x="958.60" y="748.80" font-size="10" fill="#6a6a6a" textLength="18.40" lengthAdjust="spacingAndGlyphs">96%</text>
<rect x="998" y="741.4" width="10.6" height="7.8" rx="1.2" fill="none" stroke="#6a6a6a" stroke-width="1"/>
<path d="M999.4 742.8 L1002.2 742.8 L999.4 745 Z M1007.2 742.8 L1004.4 742.8 L1007.2 745 Z M999.4 747.8 L1002.2 747.8 L999.4 745.6 Z M1007.2 747.8 L1004.4 747.8 L1007.2 745.6 Z" fill="#7a7a7a"/>
</g>
<g id="annotation">
<rect x="5.9" y="697.5" width="875" height="47.8" rx="1.5" fill="none" stroke="#e51517" stroke-width="5"/>
<path d="M592.4 541 L478 661.6" stroke="#e51517" stroke-width="4.3" fill="none"/>
<path d="M462.4 677.8 L472.6 652.8 L487.6 667 Z" fill="#e51517"/>
</g>
</svg>
</body>
</html>
